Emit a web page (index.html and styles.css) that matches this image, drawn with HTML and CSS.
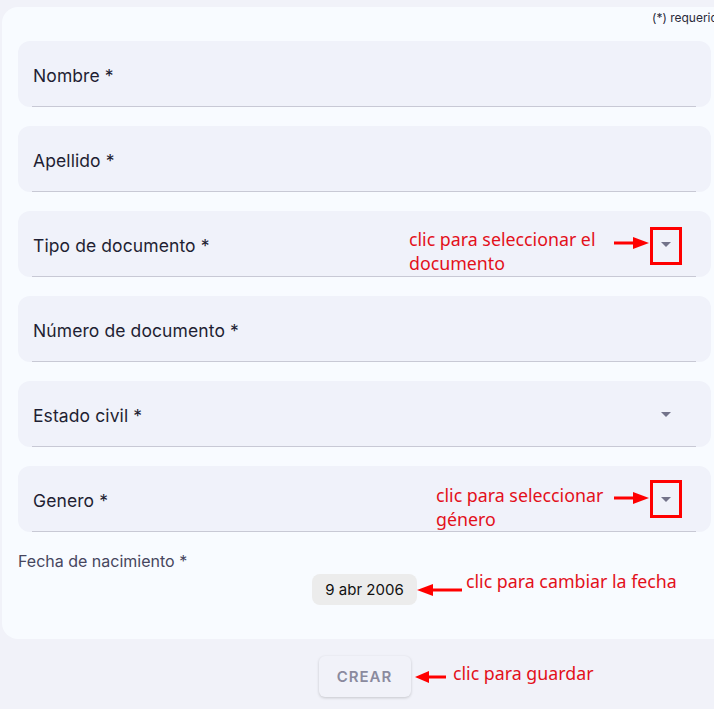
FILE: index.html
```html
<!DOCTYPE html>
<html lang="es">
<head>
<meta charset="utf-8">
<link rel="stylesheet" href="styles.css">
</head>
<body>
<div class="page">
  <div class="card">
    <div class="note">(*) requerido</div>
    <div class="fields">
      <div class="field"><div class="field-inner"><span class="label">Nombre *</span></div></div>
      <div class="field"><div class="field-inner"><span class="label">Apellido *</span></div></div>
      <div class="field"><div class="field-inner"><span class="label">Tipo de documento *</span><span class="caret"></span></div></div>
      <div class="field"><div class="field-inner"><span class="label">Número de documento *</span></div></div>
      <div class="field"><div class="field-inner"><span class="label">Estado civil *</span><span class="caret"></span></div></div>
      <div class="field"><div class="field-inner"><span class="label">Genero *</span><span class="caret"></span></div></div>
    </div>
    <div class="date-label">Fecha de nacimiento *</div>
    <div class="date-row"><span class="chip">9 abr 2006</span></div>
  </div>
  <div class="actions"><button class="btn">CREAR</button></div>
</div>

<div class="ann ann-doc">clic para seleccionar el<br>documento</div>
<div class="ann ann-gen">clic para seleccionar<br>género</div>
<div class="ann ann-date">clic para cambiar la fecha</div>
<div class="ann ann-save">clic para guardar</div>

<div class="box box-doc"></div>
<div class="box box-gen"></div>

<svg class="arrow arrow-doc" width="36" height="14" viewBox="0 0 36 14"><path d="M0 7 H20" stroke="#f00" stroke-width="3"/><path d="M19 1 L35 7 L19 13 Z" fill="#f00"/></svg>
<svg class="arrow arrow-gen" width="36" height="14" viewBox="0 0 36 14"><path d="M0 7 H20" stroke="#f00" stroke-width="3"/><path d="M19 1 L35 7 L19 13 Z" fill="#f00"/></svg>
<svg class="arrow arrow-date" width="46" height="14" viewBox="0 0 46 14"><path d="M16 7 H46" stroke="#f00" stroke-width="3"/><path d="M17 1 L1 7 L17 13 Z" fill="#f00"/></svg>
<svg class="arrow arrow-save" width="32" height="14" viewBox="0 0 32 14"><path d="M14 7 H32" stroke="#f00" stroke-width="3"/><path d="M15 1 L1 7 L15 13 Z" fill="#f00"/></svg>
</body>
</html>
```
FILE: styles.css
```css
html, body {
  margin: 0;
  padding: 0;
}
body {
  width: 714px;
  height: 709px;
  overflow: hidden;
  background: #f1f2f9;
  font-family: Inter, "Noto Sans", sans-serif;
  position: relative;
}
.page {
  padding: 7px 0 0 2px;
  width: 760px;
}
.card {
  background: #f8fbff;
  border-radius: 16px;
  padding: 0 0 34px 16px;
}
.note {
  height: 34px;
  box-sizing: border-box;
  padding: 3px 0 0 634px;
  font-size: 12px;
  color: #2a2a3a;
  white-space: nowrap;
}
.fields {
  width: 693px;
  display: flex;
  flex-direction: column;
  gap: 19px;
}
.field {
  height: 66px;
  background: #f0f2fa;
  border-radius: 12px;
  display: flex;
}
.field-inner {
  flex: 1;
  margin: 0 15px 0 14px;
  border-bottom: 1px solid #c8c9d5;
  display: flex;
  align-items: center;
  justify-content: space-between;
  padding: 4px 0 0 1px;
}
.label {
  font-size: 17.5px;
  letter-spacing: 0.1px;
  color: #1f1f33;
}
.caret {
  width: 0;
  height: 0;
  border-left: 5px solid transparent;
  border-right: 5px solid transparent;
  border-top: 5px solid #73738a;
  margin: 0 25px 3px 0;
}
.date-label {
  margin-top: 21px;
  font-size: 16px;
  line-height: 17px;
  color: #46465e;
}
.date-row {
  width: 693px;
  display: flex;
  justify-content: center;
  margin-top: 4px;
}
.chip {
  display: inline-flex;
  align-items: center;
  justify-content: center;
  width: 105px;
  height: 31px;
  border-radius: 8px;
  background: #ececec;
  font-size: 15px;
  color: #111;
}
.actions {
  width: 693px;
  margin: 17px 0 0 16px;
  display: flex;
  justify-content: center;
}
.btn {
  width: 92px;
  height: 41px;
  border: none;
  border-radius: 6px;
  background: #f1f2f9;
  box-shadow: 0 1px 3px rgba(0,0,0,0.18);
  font-family: Inter, sans-serif;
  font-weight: 600;
  font-size: 15px;
  letter-spacing: 1px;
  color: #8a8a9e;
}
.ann {
  position: absolute;
  font-family: "Noto Sans", sans-serif;
  font-size: 17.8px;
  line-height: 24px;
  color: #e3101a;
  white-space: nowrap;
}
.ann-doc { left: 409px; top: 227px; }
.ann-gen { left: 436px; top: 483px; }
.ann-date { left: 466px; top: 569px; }
.ann-save { left: 453px; top: 661px; }
.box {
  position: absolute;
  width: 32px;
  height: 38px;
  box-sizing: border-box;
  border: 3px solid #ff0000;
}
.box-doc { left: 650px; top: 227px; }
.box-gen { left: 650px; top: 480px; }
.arrow { position: absolute; }
.arrow-doc { left: 614px; top: 236px; }
.arrow-gen { left: 614px; top: 491px; }
.arrow-date { left: 416px; top: 583px; }
.arrow-save { left: 414px; top: 670px; }
```
